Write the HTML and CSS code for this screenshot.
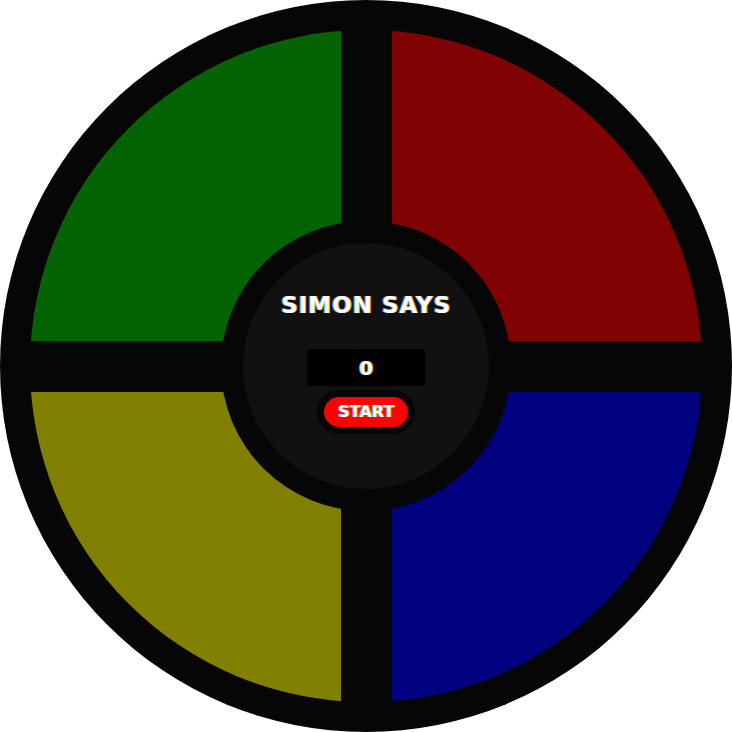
FILE: index.html
```html
<!DOCTYPE html>
<html lang="en">
<head>
<meta charset="utf-8">
<title>Simon Says</title>
<link rel="stylesheet" href="styles.css">
</head>
<body>
<div class="board">
  <div class="pads">
    <button class="pad pad-green" aria-label="green"></button>
    <button class="pad pad-red" aria-label="red"></button>
    <button class="pad pad-yellow" aria-label="yellow"></button>
    <button class="pad pad-blue" aria-label="blue"></button>
  </div>
  <div class="hub">
    <div class="hub-inner">
      <h1 class="title">SIMON SAYS</h1>
      <div class="score">0</div>
      <div class="start-wrap">
        <button class="start">START</button>
      </div>
    </div>
  </div>
</div>
</body>
</html>
```
FILE: styles.css
```css
html, body {
  margin: 0;
  padding: 0;
  background: #ffffff;
}

.board {
  width: 732px;
  height: 732px;
  box-sizing: border-box;
  padding: 30px;
  border-radius: 50%;
  background: #060606;
  display: grid;
}

.pads {
  grid-area: 1 / 1;
  width: 672px;
  height: 672px;
  border-radius: 50%;
  overflow: hidden;
  display: grid;
  grid-template-columns: 310.5px 310.5px;
  grid-template-rows: 310.5px 310.5px;
  column-gap: 51px;
  row-gap: 51px;
}

.pad {
  border: 0;
  padding: 0;
  margin: 0;
  display: block;
  width: 100%;
  height: 100%;
}

.pad-green { background: #046404; }
.pad-red { background: #800202; }
.pad-yellow { background: #828002; }
.pad-blue { background: #020280; }

.hub {
  grid-area: 1 / 1;
  place-self: center;
  width: 290px;
  height: 290px;
  box-sizing: border-box;
  padding: 22px;
  border-radius: 50%;
  background: #060606;
  display: flex;
}

.hub-inner {
  flex: 1;
  border-radius: 50%;
  background: #111111;
  display: flex;
  flex-direction: column;
  align-items: center;
  padding-top: 49px;
  box-sizing: border-box;
}

.title {
  margin: 0;
  font-family: "DejaVu Sans", sans-serif;
  font-weight: bold;
  font-size: 23px;
  line-height: 26px;
  letter-spacing: 1px;
  color: #ffffff;
  text-shadow: -1px 0 #2a8cff, 1px 0 #ffb000;
}

.score {
  margin-top: 31px;
  width: 118px;
  height: 37px;
  border-radius: 3px;
  background: #000000;
  color: #ffffff;
  font-family: "DejaVu Sans", sans-serif;
  font-weight: bold;
  font-size: 20px;
  line-height: 39px;
  text-align: center;
  text-shadow: -1px 0 #2a8cff, 1px 0 #ffb000;
}

.start-wrap {
  margin-top: 4px;
  width: 98px;
  height: 44px;
  box-sizing: border-box;
  padding: 7px;
  border-radius: 22px;
  background: #060606;
  display: flex;
}

.start {
  flex: 1;
  border: 0;
  margin: 0;
  padding: 0;
  border-radius: 15px;
  background: #ff0000;
  color: #ffffff;
  font-family: "DejaVu Sans", sans-serif;
  font-weight: bold;
  font-size: 16px;
  line-height: 30px;
  text-shadow: -1px 0 #2a8cff, 1px 0 #ffb000;
}
```
